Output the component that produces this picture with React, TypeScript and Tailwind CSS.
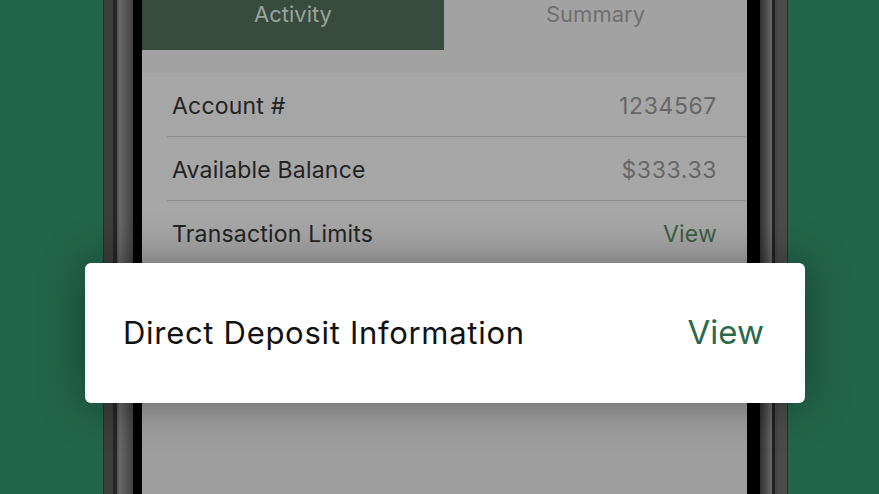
import React from 'react';

const rows = [
  { label: 'Account #', value: '1234567', link: false },
  { label: 'Available Balance', value: '$333.33', link: false },
  { label: 'Transaction Limits', value: 'View', link: true },
  { label: 'Direct Deposit Information', value: 'View', link: true },
];

const App: React.FC = () => {
  return (
    <div
      className="relative w-[879px] h-[494px] overflow-hidden bg-[#23654a] flex"
      style={{ fontFamily: 'Inter, "Noto Sans", sans-serif' }}
    >
      {/* Phone */}
      <div className="ml-[103px] w-[685px] h-full flex">
        {/* Left bezel */}
        <div className="w-[39px] h-full flex">
          <div className="w-[10px] bg-[#3d3d3d] border-l border-[#2c2c2c]" />
          <div className="w-[4px] bg-[#262626]" />
          <div className="w-[2px] bg-[#575757]" />
          <div className="w-[14px] bg-gradient-to-r from-[#6c6c6c] to-[#414141]" />
          <div className="w-[9px] bg-black" />
        </div>

        {/* Screen */}
        <div className="w-[605px] h-full flex flex-col bg-[#9e9e9e]">
          <div className="h-[50px] flex shrink-0">
            <div className="w-[302px] bg-[#374b3e] flex justify-center items-start">
              <span className="text-[22px] leading-[28px] text-[#9ba39d]">Activity</span>
            </div>
            <div className="flex-1 bg-[#a2a2a2] flex justify-center items-start">
              <span className="text-[22px] leading-[28px] text-[#6f6f6f]">Summary</span>
            </div>
          </div>
          <div className="h-[23px] bg-[#a2a2a2] shrink-0" />
          <div className="bg-[#a6a6a6] pl-[25px] shrink-0">
            {rows.map((row) => (
              <div
                key={row.label}
                className="h-[64px] flex items-center justify-between pl-[5px] pr-[30px] pt-[3px] border-b border-[#8d8d8d]"
              >
                <span className="text-[23px] tracking-[0.2px] text-[#232323]">{row.label}</span>
                <span
                  className={
                    row.link
                      ? 'text-[23px] tracking-[0.2px] text-[#3b5e43]'
                      : 'text-[23px] tracking-[0.6px] text-[#666666]'
                  }
                >
                  {row.value}
                </span>
              </div>
            ))}
          </div>
          <div className="flex-1 bg-[#9e9e9e]" />
        </div>

        {/* Right bezel */}
        <div className="w-[41px] h-full flex">
          <div className="w-[13px] bg-black" />
          <div className="w-[12px] bg-gradient-to-r from-[#303030] to-[#6a6a6a]" />
          <div className="w-[3px] bg-[#202020]" />
          <div className="w-[3px] bg-[#454545]" />
          <div className="w-[10px] bg-[#4b4b4b] border-r border-[#2c2c2c]" />
        </div>
      </div>

      {/* Highlighted row popped out */}
      <div className="absolute left-[85px] top-[263px] w-[720px] h-[140px] rounded-[6px] bg-white shadow-[0_0_45px_rgba(0,0,0,0.38)] flex items-center justify-between pl-[38px] pr-[41px]">
        <span className="text-[31px] tracking-[0.7px] text-[#111111]">Direct Deposit Information</span>
        <span className="text-[33px] text-[#2a6a4b]">View</span>
      </div>
    </div>
  );
};

export default App;
